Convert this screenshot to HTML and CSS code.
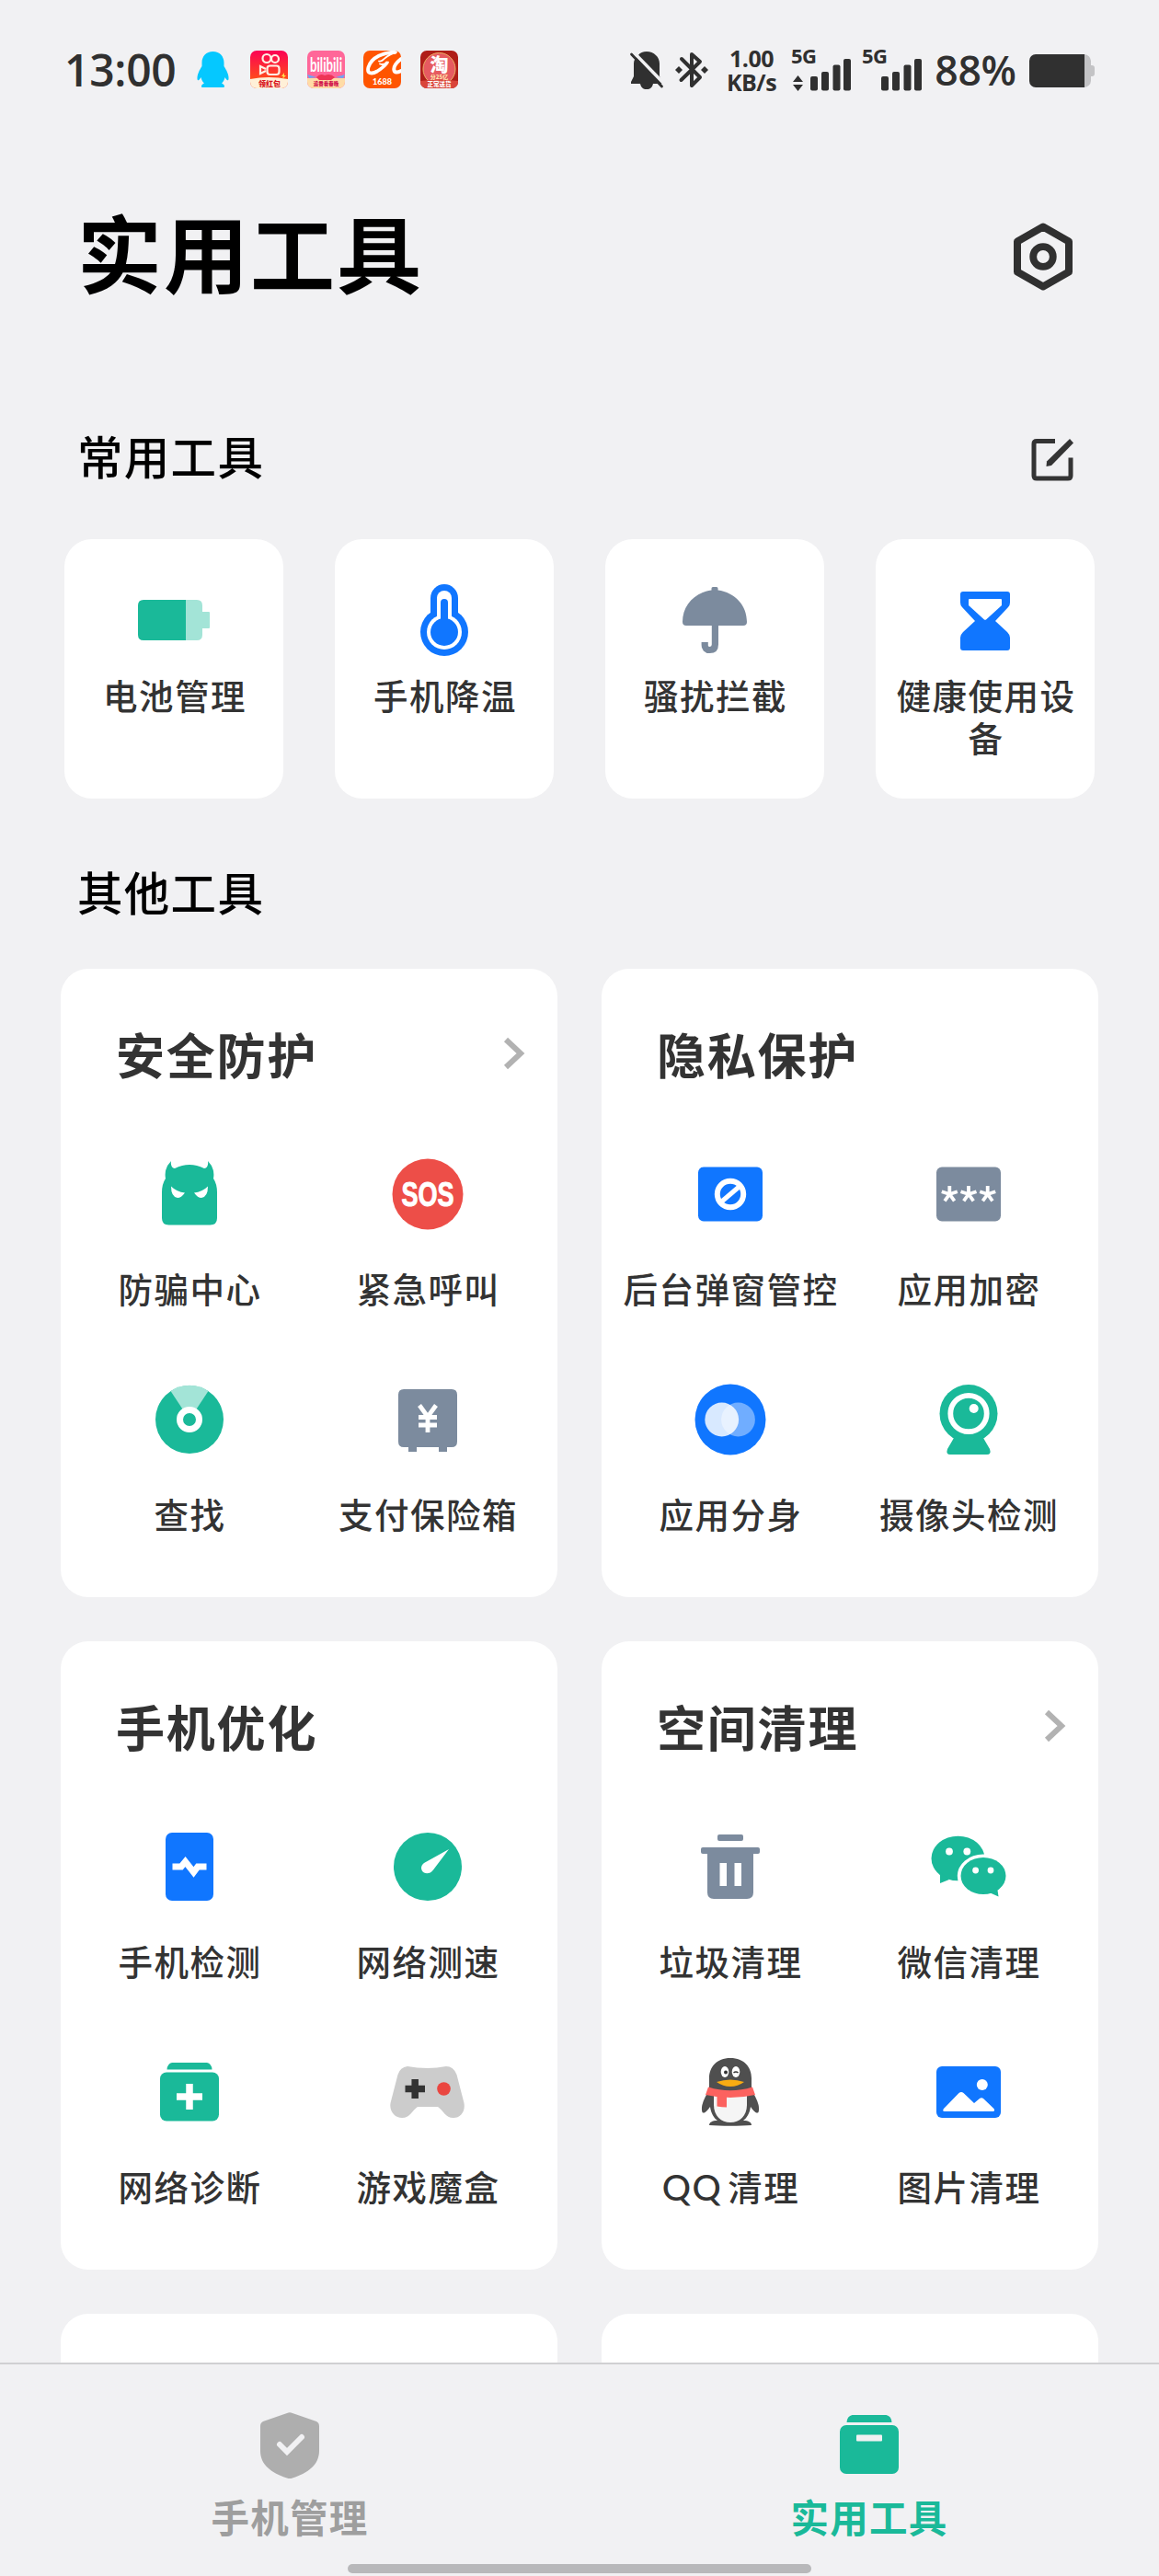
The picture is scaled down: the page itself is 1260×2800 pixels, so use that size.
FILE: index.html
```
<!DOCTYPE html>
<html lang="zh-CN">
<head>
<meta charset="UTF-8">
<title>实用工具</title>
<link rel="stylesheet" href="styles.css">
</head>

<body>
<div class="phone">

	<!-- 状态栏 -->
	<div class="status">
		<span class="time">13:00</span>
		<svg class="qq" width="35" height="40" viewBox="0 0 35 40">
			<path fill="#05c8ff" d="M17.500 0C10 0 5.500 5.500 5.500 12v4C3 20 0 25 .5 30c.4 2.500 2.500 1 4-2 .6 3 1.800 5 3.500 6.500C5 35.500 4 39 6 39h23c2 0 1-3.500-2-4.500 1.700-1.500 3-3.500 3.500-6.500 1.500 3 3.600 4.500 4 2 .5-5-2.500-10-5-14v-4C29.500 5.500 25 0 17.500 0z"/>
		</svg>
		<svg class="app" viewBox="0 0 41 41">
			<defs><linearGradient id="ks" x1="0" y1="0" x2="0" y2="1"><stop offset="0" stop-color="#fb0355"/><stop offset=".75" stop-color="#ff4a1c"/></linearGradient></defs>
			<rect width="41" height="41" rx="7" fill="url(#ks)"/>
			<path fill="#fff0d8" d="M0 31Q20 27 41 31V34a7 7 0 0 1-7 7H7a7 7 0 0 1-7-7z"/>
			<g fill="none" stroke="#fff0e4" stroke-width="2.200"><circle cx="18" cy="8.500" r="4.500"/><circle cx="27" cy="9" r="4"/><rect x="18.500" y="16.500" width="13" height="9.500" rx="3"/><path d="M17 20l-6-3v8l6-3"/></g>
			<path fill="#ffe14d" d="M37 24l-3 4h2l-1 3 4-4h-2z"/>
			<text class="cn tag" x="21" y="39" font-size="8" fill="#d81420">领红包</text>
		</svg>
		<svg class="app" viewBox="0 0 41 41">
			<rect width="41" height="41" rx="7" fill="#ff6799"/>
			<path fill="#ffdca6" d="M0 30H41V34a7 7 0 0 1-7 7H7a7 7 0 0 1-7-7z"/>
			<path fill="#ee3556" d="M10 29q4-5 9-2 6-3 11 2l-4 3H13z"/>
			<path fill="#6ba6f5" d="M0 26l10 3-8 1zM41 26l-10 3 8 1z"/>
			<text class="logo" x="20.500" y="23" font-size="20" textLength="35" lengthAdjust="spacingAndGlyphs" fill="#fff">bilibili</text>
			<text class="cn tag" x="20.500" y="38" font-size="5.500" fill="#d1124c">追番看春晚</text>
		</svg>
		<svg class="app" viewBox="0 0 41 41">
			<defs><clipPath id="ali"><rect width="41" height="41" rx="7"/></clipPath></defs>
			<g clip-path="url(#ali)">
				<rect width="41" height="41" fill="#ff5500"/>
				<path fill="none" stroke="#fff" stroke-width="3.800" stroke-linecap="round" d="M35 1.500C22 2 9 7 5.500 18 3.500 25 9 26 15 22.500 19 20 23 17 25.500 13.500"/>
				<path fill="none" stroke="#fff" stroke-width="1.800" stroke-linecap="round" d="M35 2.500C29 3 25 7 22 9.500c-2 2-3.500 2.500-5 2M18 14.500c3 1 6 .5 9-2"/>
				<path fill="none" stroke="#fff" stroke-width="4" stroke-linecap="round" d="M41 9c-5 4-8.500 9-7.500 12.500C34 24 37 24 41 22"/>
			</g>
			<text class="num" x="20.500" y="37" font-size="9" fill="#fff">1688</text>
		</svg>
		<svg class="app" viewBox="0 0 41 41">
			<rect width="41" height="41" rx="7" fill="#af1e18"/>
			<circle cx="20.500" cy="20" r="17.500" fill="#e65a60" stroke="#edae64"/>
			<path fill="#d9453a" d="M0 33Q20 30 41 33V34a7 7 0 0 1-7 7H7a7 7 0 0 1-7-7z"/>
			<text class="cn tag" x="20.500" y="23" font-size="20" fill="#fff">淘</text>
			<text class="cn tag" x="20.500" y="31" font-size="6" fill="#ffe3a9">分25亿</text>
			<text class="cn tag" x="20.500" y="39" font-size="6.500" fill="#fff">正常送货</text>
		</svg>

		<div class="status-right">
			<svg class="bell" width="36" height="42" viewBox="0 0 36 42">
				<path fill="#303030" d="M8.500 5.500C11 2 14 1 18 1c8 0 14 6 14 13v14l3 6v2H25c-1 4-3 6-7 6s-6-2-7-6H1v-2l3-6V14c0-4 2-6 4.500-8.500z"/>
				<path stroke="#f1f1f3" stroke-width="3.500" d="M3 1l34 35"/>
				<path stroke="#303030" stroke-width="2.800" stroke-linecap="round" d="M1.500 4l33 35"/>
			</svg>
			<svg class="bt" width="36" height="40" viewBox="0 0 36 40">
				<path fill="none" stroke="#303030" stroke-width="4" stroke-linejoin="round" stroke-linecap="round" d="M7 8l20 20-9 9V3l9 8L6.500 31"/>
				<path fill="#303030" d="M0 20l4-4 4 4-4 4zM28 20l4-4 4 4-4 4z"/>
			</svg>
			<div class="speed"><span>1.00</span><span>KB/s</span></div>
			<svg class="sig" width="64" height="48" viewBox="0 0 64 48">
				<text class="net" x="-1" y="19">5G</text>
				<path fill="#303030" d="M1 37l5.500-7 5.500 7zM1 40h11l-5.500 7z"/>
				<g fill="#303030"><rect x="20" y="31" width="8" height="15.500" rx="2"/><rect x="32" y="26" width="8" height="20.500" rx="2"/><rect x="44.500" y="18.500" width="8" height="28" rx="2"/><rect x="56" y="12" width="8" height="34.500" rx="2"/></g>
			</svg>
			<svg class="sig" width="64" height="48" viewBox="0 0 64 48">
				<text class="net" x="-1" y="19">5G</text>
				<g fill="#303030"><rect x="20" y="31" width="8" height="15.500" rx="2"/><rect x="32" y="26" width="8" height="20.500" rx="2"/><rect x="44.500" y="18.500" width="8" height="28" rx="2"/><rect x="56" y="12" width="8" height="34.500" rx="2"/></g>
			</svg>
			<span class="percent">88%</span>
			<svg class="power" width="71" height="36" viewBox="0 0 71 36">
				<path fill="#c3c3c5" d="M60 0a7.500 7.500 0 0 1 7 7v5h1q3 0 3 3v6q0 3-3 3h-1v5a7.500 7.500 0 0 1-7 7z"/>
				<path fill="#303030" d="M7 0H60V36H7a7 7 0 0 1-7-7V7a7 7 0 0 1 7-7z"/>
			</svg>
		</div>
	</div>

	<!-- 标题 -->
	<div class="header">
		<h1>实用工具</h1>
		<svg class="setting" width="64" height="74" viewBox="0 0 64 74">
			<path fill="none" stroke="#303030" stroke-width="8" stroke-linejoin="round" d="M32 4.500L60 20.500v33L32 69.500 4 53.500v-33z"/>
			<circle cx="32" cy="37" r="10.800" fill="none" stroke="#303030" stroke-width="7.800"/>
		</svg>
	</div>

	<div class="section-head first">
		<h2>常用工具</h2>
		<svg class="edit" width="48" height="48" viewBox="0 0 48 48">
			<path fill="none" stroke="#343434" stroke-width="5" d="M27 3.500H7q-3 0-3 3V41q0 3 3 3H41q3 0 3-3V21.500"/>
			<path fill="#343434" d="M43 1l4 4.500L23 30l-5.500 1 .5-5.500z"/>
		</svg>
	</div>

	<div class="tools">
		<div class="tool">
			<svg class="icon" viewBox="-48 -48 96 96">
				<path fill="#a3e4d7" d="M12-22H25q6 0 6 6v7h7q1 0 1 1V8q0 1-1 1H31v7q0 6-6 6H12z"/>
				<path fill="#1ab999" d="M13-22H-33q-6 0-6 6V16q0 6 6 6H13z"/>
			</svg>
			<p>电池管理</p>
		</div>
		<div class="tool">
			<svg class="icon" viewBox="-48 -48 96 96">
				<g fill="#1076ff"><rect x="-15" y="-39" width="30" height="50" rx="15"/><circle cy="13" r="26"/></g>
				<g fill="#fff"><rect x="-8" y="-32" width="16" height="36" rx="8"/><circle cy="13" r="19"/></g>
				<g fill="#1076ff"><rect x="-4" y="-23" width="8" height="30" rx="4"/><circle cy="13" r="15"/></g>
			</svg>
			<p>手机降温</p>
		</div>
		<div class="tool">
			<svg class="icon" viewBox="-48 -48 96 96">
				<path fill="#7c8b9e" d="M-3.500-32.500v-2q0-1.500 1.500-1.500H2q1.500 0 1.500 1.500v2C22-30 35-16 35 2q0 4-4 4H-31q-4 0-4-4C-35-16-22-30-3.500-32.500z"/>
				<path fill="none" stroke="#7c8b9e" stroke-width="7.200" d="M.4 5V26.500q0 6-5.700 6t-5.500-6V24"/>
			</svg>
			<p>骚扰拦截</p>
		</div>
		<div class="tool">
			<svg class="icon" viewBox="-48 -48 96 96">
				<path fill="#1076ff" d="M-24-31H24q3 0 3 3v9q0 3-2 5L11 1 24 13q3 3 3 6V30q0 3-3 3H-24q-3 0-3-3V19q0-3 3-6L-11 1-25-14q-2-2-2-5v-9q0-3 3-3z"/>
				<path fill="#fff" d="M-17-23H17q1 0 1 1v6L1-.5q-1 .5-2 0L-18-16v-6q0-1 1-1z"/>
			</svg>
			<p>健康使用设备</p>
		</div>
	</div>

	<div class="section-head">
		<h2>其他工具</h2>
	</div>

	<div class="cards">

		<div class="card">
			<div class="card-title">
				<h3>安全防护</h3>
				<svg class="arrow" width="22" height="36" viewBox="0 0 22 36"><path fill="none" stroke="#b2b2b2" stroke-width="6" d="M2 3l16 15L2 33"/></svg>
			</div>
			<div class="grid">
				<div class="item">
					<svg class="icon" viewBox="-48 -48 96 96">
						<path fill="#1ab999" d="M-20-36q-1 7 4 8Q0-36 16-28q5-1 4-8 8 8 6 19 4 6 4 15V26q0 7.500-7.500 7.500h-45q-7.500 0-7.500-7.500V-2q0-9 4-15-2-11 6-19z"/>
						<path fill="#fff" d="M-20-8.500q6 6 15 7Q-9 4-13 4q-7-1-7-12.500zM20-8.500q-6 6-15 7Q9 4 13 4q7-1 7-12.500z"/>
					</svg>
					<p>防骗中心</p>
				</div>
				<div class="item">
					<svg class="icon" viewBox="-48 -48 96 96">
						<circle r="38.500" fill="#ed4e48"/>
						<text class="sos" y="13" textLength="57" lengthAdjust="spacingAndGlyphs">SOS</text>
					</svg>
					<p>紧急呼叫</p>
				</div>
				<div class="item">
					<svg class="icon" viewBox="-48 -48 96 96">
						<circle r="37" fill="#1ab999"/>
						<path fill="#a3e4d7" d="M0 0L-20.500-31A37 37 0 0 1 20.500-31z"/>
						<circle r="10.500" fill="#1ab999" stroke="#fff" stroke-width="7"/>
					</svg>
					<p>查找</p>
				</div>
				<div class="item">
					<svg class="icon" viewBox="-48 -48 96 96">
						<path fill="#7c8b9e" d="M-26-33H26q6 0 6 6V24q0 6-6 6H21v5H12V30H-12v5H-21V30H-26q-6 0-6-6V-27q0-6 6-6z"/>
						<path fill="none" stroke="#fff" stroke-width="4.800" d="M-9-15.500L0-3 9-15.500M0-4V14M-10-2.500H10M-10 6H10"/>
					</svg>
					<p>支付保险箱</p>
				</div>
			</div>
		</div>

		<div class="card">
			<div class="card-title">
				<h3>隐私保护</h3>
			</div>
			<div class="grid">
				<div class="item">
					<svg class="icon" viewBox="-48 -48 96 96">
						<rect x="-35" y="-29.500" width="70" height="59" rx="6" fill="#1076ff"/>
						<g fill="none" stroke="#fff" stroke-width="6"><circle r="14.200"/><path stroke-width="5" d="M-10 8.500L10-8.500"/></g>
					</svg>
					<p>后台弹窗管控</p>
				</div>
				<div class="item">
					<svg class="icon" viewBox="-48 -48 96 96">
						<rect x="-35" y="-29.500" width="70" height="59" rx="6" fill="#7c8b9e"/>
						<g stroke="#fff" stroke-width="3.800">
							<path id="star" d="M0 0V-9M0 0l8.500-2.800M0 0l5.300 7.300M0 0l-5.300 7.300M0 0l-8.500-2.800"/>
							<use href="#star" x="-20.700"/>
							<use href="#star" x="20.700"/>
						</g>
					</svg>
					<p>应用加密</p>
				</div>
				<div class="item">
					<svg class="icon" viewBox="-48 -48 96 96">
						<circle r="38.500" fill="#1076ff"/>
						<circle cx="8.500" r="18.400" fill="#70adff"/>
						<circle cx="-9.300" r="18.400" fill="#fff" opacity=".84"/>
					</svg>
					<p>应用分身</p>
				</div>
				<div class="item">
					<svg class="icon" viewBox="-48 -48 96 96">
						<circle cy="-6.500" r="31.500" fill="#1ab999"/>
						<path fill="#1ab999" d="M-16 16H16v4L23 32q2 6-3 6H-20q-5 0-3-6L-16 20z"/>
						<circle cy="-6.500" r="19.700" fill="none" stroke="#fff" stroke-width="5.800"/>
						<circle cx="5.700" cy="-12" r="5" fill="#fff"/>
					</svg>
					<p>摄像头检测</p>
				</div>
			</div>
		</div>

		<div class="card">
			<div class="card-title">
				<h3>手机优化</h3>
			</div>
			<div class="grid">
				<div class="item">
					<svg class="icon" viewBox="-48 -48 96 96">
						<rect x="-26" y="-37" width="52" height="74" rx="7" fill="#1076ff"/>
						<path fill="none" stroke="#fff" stroke-width="7" d="M-18.500 0H-9L-4.500-5.500 4.500 6 9 0h9.500"/>
					</svg>
					<p>手机检测</p>
				</div>
				<div class="item">
					<svg class="icon" viewBox="-48 -48 96 96">
						<circle r="37" fill="#1ab999"/>
						<path fill="#fff" d="M23-19L6 3.500C3 7.500-1 8-4 6.500-8 4-8-1-4-4z"/>
					</svg>
					<p>网络测速</p>
				</div>
				<div class="item">
					<svg class="icon" viewBox="-48 -48 96 96">
						<path fill="#1ab999" d="M-19-32H19q5 1 5.500 7.500h-49q.5-6.500 5.500-7.500z"/>
						<rect x="-32" y="-21.500" width="64" height="53" rx="7" fill="#1ab999"/>
						<path stroke="#fff" stroke-width="7.500" d="M-14 5H14M0-9V19"/>
					</svg>
					<p>网络诊断</p>
				</div>
				<div class="item">
					<svg class="icon" viewBox="-48 -48 96 96">
						<path fill="#ccc" d="M-22-28Q-30-27-32.500-19L-40 10C-43 20-36 28-28 28-19 28-17 20-11 16H11C17 20 19 28 28 28 36 28 42 20 39 10L31.500-19Q28-28 20-28 10-26 0-26-12-26-22-28z"/>
						<path stroke="#333" stroke-width="7.500" d="M-24.500-3.500h21.500M-13.800-14V7"/>
						<circle cx="17.500" cy="-3.500" r="7.300" fill="#ea4640"/>
					</svg>
					<p>游戏魔盒</p>
				</div>
			</div>
		</div>

		<div class="card">
			<div class="card-title">
				<h3>空间清理</h3>
				<svg class="arrow" width="22" height="36" viewBox="0 0 22 36"><path fill="none" stroke="#b2b2b2" stroke-width="6" d="M2 3l16 15L2 33"/></svg>
			</div>
			<div class="grid">
				<div class="item">
					<svg class="icon" viewBox="-48 -48 96 96">
						<g fill="#7c8b9e"><rect x="-14" y="-35" width="28" height="7" rx="2"/><rect x="-32" y="-21" width="64" height="7" rx="2"/><path d="M-25-15H25V28q0 7-7 7H-18q-7 0-7-7z"/></g>
						<path fill="#fff" d="M-11.500-4h7.500V21h-7.500zM4.500-4h7.500V21h-7.500z"/>
					</svg>
					<p>垃圾清理</p>
				</div>
				<div class="item">
					<svg class="icon" viewBox="-48 -48 96 96">
						<ellipse cx="-11.500" cy="-9" rx="29" ry="24.300" fill="#1ab999"/>
						<path fill="#1ab999" d="M-31 6v12l10-4z"/>
						<ellipse cx="16" cy="10" rx="28.200" ry="23.500" fill="#fff"/>
						<ellipse cx="16" cy="10" rx="24.500" ry="20" fill="#1ab999"/>
						<path fill="#1ab999" d="M31 22l1.500 10.500-9-4z"/>
						<g fill="#fff"><circle cx="-21" cy="-16.500" r="3.900"/><circle cx="-1.700" cy="-16.500" r="3.900"/><circle cx="7.600" cy="4" r="3.400"/><circle cx="24" cy="4" r="3.400"/></g>
					</svg>
					<p>微信清理</p>
				</div>
				<div class="item">
					<svg class="icon" viewBox="-48 -48 96 96">
						<path fill="#4f4f4f" d="M0-37c-15 0-23 10-23 22v12c-4 8-10 17-7.500 25C-28 24-25 20-22 16c1 7 4 12 8 15-6 0-9 2-9 5 12 1 34 1 46 0 0-3-3-5-9-5 4-3 7-8 8-15 3 4 6 8 8.500 6C33 14 27 5 23-3v-12c0-12-8-22-23-22z"/>
						<path fill="#f5f5f5" d="M-18 3V14c0 12 8 19 18 19s18-7 18-19V3z"/>
						<path fill="#fc625f" d="M-24-5.500Q0 2 24-5.500L27 3Q13 6 0 6-14 6-27 3z"/>
						<path fill="#fc625f" d="M-14.500 3h10.500v13.500q-5 0-10.500-1z"/>
						<g fill="#fff"><ellipse cx="-6" cy="-22" rx="4.300" ry="6"/><ellipse cx="6" cy="-22" rx="4.300" ry="6"/></g>
						<circle cx="-5" cy="-21.500" r="2" fill="#333"/>
						<path fill="none" stroke="#333" stroke-width="1.500" d="M3.500-21q2.500-2 5 0"/>
						<path fill="#f8ac12" d="M-15-11Q0-16 15-11 8-6 0-6T-15-11z"/>
					</svg>
					<p class="qq-text"><span>QQ</span>清理</p>
				</div>
				<div class="item">
					<svg class="icon" viewBox="-48 -48 96 96">
						<rect x="-35" y="-28" width="70" height="56" rx="6" fill="#1076ff"/>
						<circle cx="14.800" cy="-8" r="6" fill="#fff"/>
						<path fill="#fff" d="M-27 18L-10.500 1q2.500-2 5 0L6 12l6-5q2-1.500 4 0l11.500 11q1.500 3-1 3h-52.500q-3 0-1-3z"/>
					</svg>
					<p>图片清理</p>
				</div>
			</div>
		</div>

		<div class="card"></div>
		<div class="card"></div>
	</div>

	<!-- 底部导航 -->
	<div class="nav">
		<div class="tab">
			<svg class="icon" viewBox="-48 -48 96 96">
				<path fill="#aeaeae" d="M-3-35q3-1.500 6 0L29-26q3 1.500 3 5V6C32 21 20 30 3 35.500q-3 1-6 0C-20 30-32 21-32 6v-27q0-3.500 3-5z"/>
				<path fill="none" stroke="#f1f1f3" stroke-width="6" stroke-linecap="round" d="M-11-1l8 8L13-9"/>
			</svg>
			<p>手机管理</p>
		</div>
		<div class="tab active">
			<svg class="icon" viewBox="-48 -48 96 96">
				<path fill="#1ab999" d="M-18.500-33h37q5.500 1 6 8h-49q.5-7 6-8z"/>
				<rect x="-32" y="-22" width="64" height="53" rx="7" fill="#1ab999"/>
				<rect x="-14" y="-11.500" width="28" height="7" rx="1" fill="#f1f1f3"/>
			</svg>
			<p>实用工具</p>
		</div>
		<div class="home-bar"></div>
	</div>

</div>
</body>
</html>
```
FILE: styles.css
```
* {
	box-sizing: border-box;
}

body {
	margin: 0;
	background: #f1f1f3;
	font-family: "Noto Sans CJK SC", sans-serif;
	color: #333;
}

h1, h2, h3, p {
	margin: 0;
}

svg {
	display: block;
	flex: none;
	overflow: visible;
}

.phone {
	position: relative;
	width: 1260px;
	height: 2800px;
	display: flex;
	flex-direction: column;
	overflow: hidden;
}

/* 状态栏 */
.status {
	flex: none;
	display: flex;
	align-items: center;
	height: 151px;
	padding: 0 70px;
	color: #303030;
	font-family: "Open Sans", sans-serif;
	font-weight: 600;
}

.time {
	width: 144px;
	font-size: 48px;
	line-height: 60px;
	letter-spacing: -.3px;
}

.app {
	width: 41px;
	height: 41px;
	margin-left: 20.700px;
}

.qq + .app {
	margin-left: 23px;
}

.cn {
	font-family: "Noto Sans CJK SC", sans-serif;
	font-weight: 900;
}

.tag, .num, .logo, .sos {
	text-anchor: middle;
}

.num, .logo {
	font-family: Lato, sans-serif;
	font-weight: 900;
}

.logo {
	font-weight: 700;
}

.status-right {
	display: flex;
	align-items: center;
	margin-left: auto;
}

.bt {
	margin-left: 13px;
}

.speed {
	width: 56px;
	margin-left: 19px;
	display: flex;
	flex-direction: column;
	align-items: center;
	font-size: 25px;
	line-height: 26px;
	font-weight: 700;
	letter-spacing: -.5px;
	white-space: nowrap;
}

.sig {
	margin-left: 16px;
}

.sig + .sig {
	margin-left: 13px;
}

.net {
	font-size: 22px;
	font-weight: 700;
	letter-spacing: -.5px;
	fill: #303030;
	transform: translateY(-2px);
}

.percent {
	width: 87px;
	margin-left: 15px;
	font-size: 44.500px;
	line-height: 60px;
	letter-spacing: -.3px;
	white-space: nowrap;
	display: flex;
	justify-content: center;
}

.power {
	margin: 3px 0 0 15px;
}

/* 标题 */
.header {
	flex: none;
	display: flex;
	align-items: center;
	justify-content: space-between;
	height: 242px;
	padding: 0 94px 0 84px;
}

h1 {
	font-size: 92px;
	line-height: 110px;
	letter-spacing: 2px;
	color: #000;
}

.setting {
	margin-top: 14px;
}

.section-head {
	flex: none;
	display: flex;
	align-items: center;
	justify-content: space-between;
	height: 185px;
	padding: 17px 92px 0 84px;
}

.section-head.first {
	height: 193px;
	padding-top: 11px;
}

h2 {
	font-size: 49.500px;
	line-height: 60px;
	letter-spacing: 1.300px;
	font-weight: 500;
	color: #000;
}

.edit {
	margin-top: 10px;
}

/* 常用工具 */
.tools {
	flex: none;
	display: grid;
	grid-template-columns: repeat(4, 238px);
	gap: 56px;
	padding: 0 70px;
}

.tool {
	height: 282px;
	padding: 40px 18px 0;
	border-radius: 30px;
	background: #fff;
	text-align: center;
}

.icon {
	width: 96px;
	height: 96px;
	margin: 0 auto;
}

.tool p, .item p {
	font-size: 37.500px;
	line-height: 46px;
	letter-spacing: 1.500px;
	font-weight: 500;
}

.tool p {
	margin: 10px -1px 0 1px;
}

/* 其他工具 */
.cards {
	flex: 1;
	min-height: 0;
	overflow: hidden;
	display: grid;
	grid-template-columns: 540px 540px;
	grid-auto-rows: 683px;
	gap: 48px;
	padding: 0 66px;
}

.card {
	border-radius: 30px;
	background: #fff;
}

.card-title {
	display: flex;
	align-items: center;
	justify-content: space-between;
	height: 184px;
	margin-bottom: 13px;
	padding: 0 36px 0 60px;
}

h3 {
	font-size: 53px;
	line-height: 64px;
	letter-spacing: 1.800px;
	font-weight: 700;
}

.grid {
	display: grid;
	grid-template-columns: 259px 259px;
	grid-auto-rows: 245px;
	padding: 0 10px;
}

.item {
	text-align: center;
	white-space: nowrap;
}

.item p {
	margin: 31px -1px 0 1px;
}

.qq-text span {
	margin-right: 6px;
	font-family: Lato, sans-serif;
	font-size: 39px;
	line-height: 1;
}

.sos {
	font-family: "Liberation Sans", sans-serif;
	font-size: 36px;
	font-weight: 700;
	fill: #fff;
	stroke: #fff;
}

/* 底部导航 */
.nav {
	flex: none;
	position: relative;
	display: flex;
	height: 232px;
	padding-top: 40px;
	border-top: 2px solid #d0d0d2;
	background: #f1f1f3;
}

.tab {
	flex: 1;
	text-align: center;
	color: #9e9e9e;
}

.tab p {
	margin-top: 6px;
	font-size: 41.500px;
	line-height: 46px;
	letter-spacing: 1.200px;
	font-weight: 700;
}

.tab.active {
	color: #1ab999;
}

.home-bar {
	position: absolute;
	left: 378px;
	bottom: 3px;
	width: 504px;
	height: 10px;
	border-radius: 5px;
	background: #b8b8ba;
}
```
